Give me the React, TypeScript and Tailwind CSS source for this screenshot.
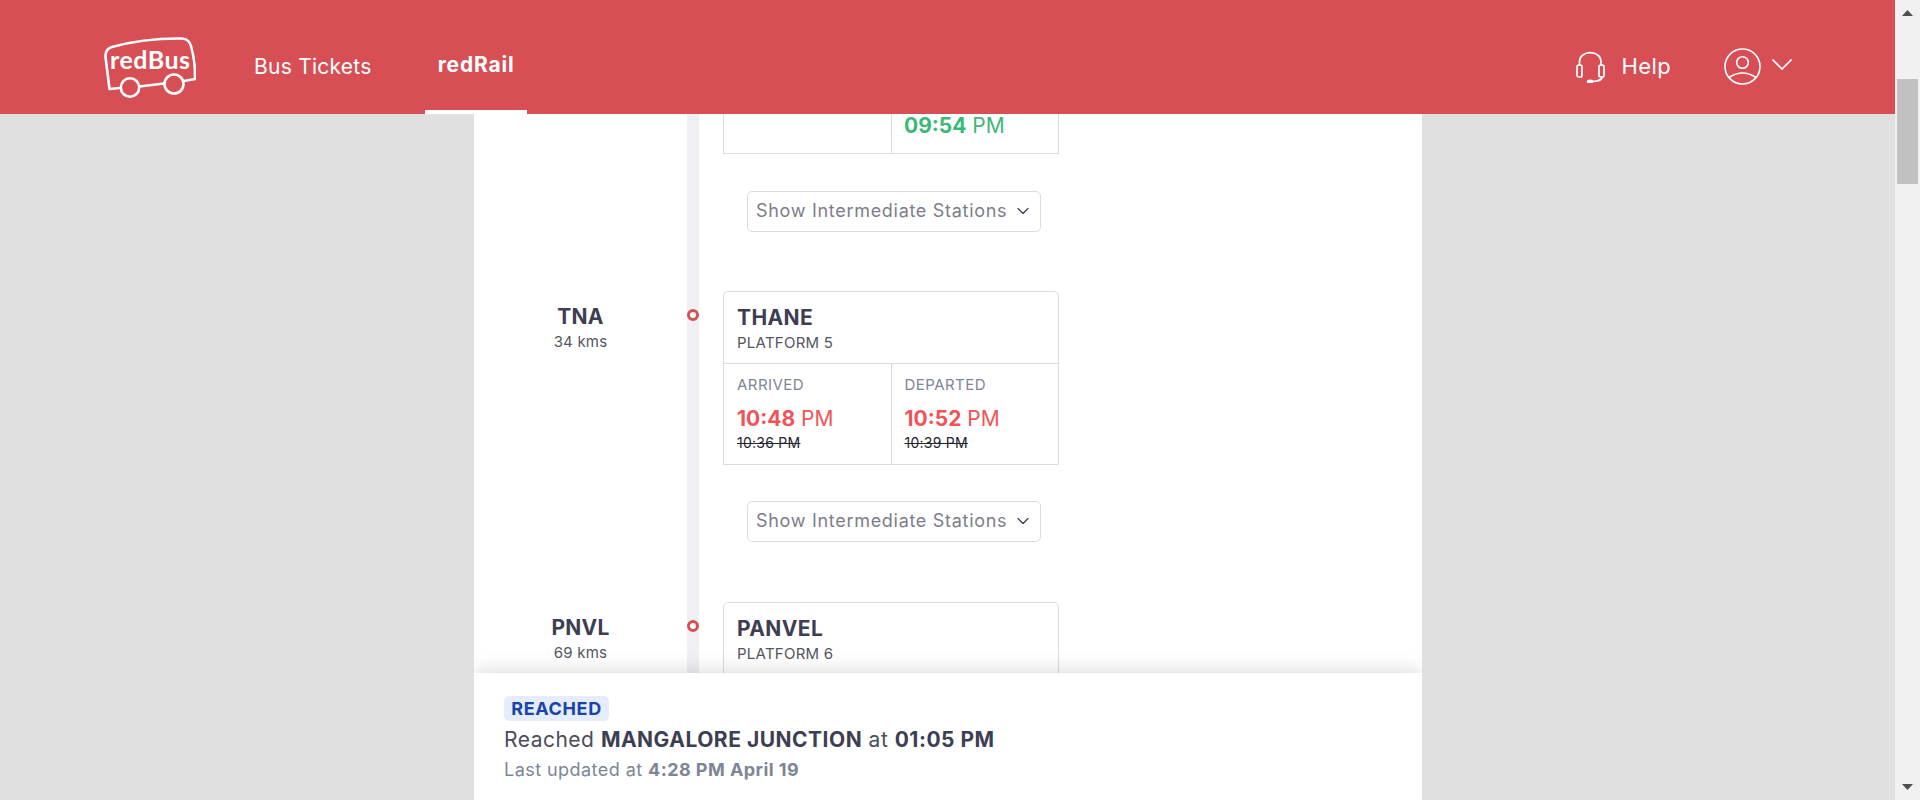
import { ChevronDown } from "lucide-react";

type Time = { label: string; time: string; scheduled: string };

const thaneTimes: Time[] = [
  { label: "ARRIVED", time: "10:48", scheduled: "10:36 PM" },
  { label: "DEPARTED", time: "10:52", scheduled: "10:39 PM" },
];

function Logo() {
  return (
    <svg width="92" height="62" viewBox="0 0 92 62" fill="none" stroke="white" strokeWidth="2.6" strokeLinejoin="round" strokeLinecap="round">
      <path d="M16 51 L5.5 52 L1.5 20 Q1 12 8 10 Q40 1 78 1.5 Q85 2 87 9 Q91.5 25 91 42 L80 44 M60 46.5 L35.5 49.5" />
      <circle cx="26" cy="50.5" r="9.2" />
      <circle cx="70" cy="47" r="9.5" />
      <text x="6" y="32" fill="white" stroke="none" fontSize="25" fontWeight="700" fontFamily="Lato, sans-serif" textLength="80">
        redBus
      </text>
    </svg>
  );
}

function Headset() {
  return (
    <svg width="29" height="32" viewBox="0 0 29 32" fill="none" stroke="white" strokeWidth="1.7" strokeLinecap="round">
      <path d="M3.5 14 V11 C3.5 -1.5 25 -1.5 25 11 V14" />
      <rect x="1" y="14" width="5" height="12" rx="1.8" />
      <rect x="23" y="14" width="5" height="12" rx="1.8" />
      <path d="M26 26 C26 29.5 22 30 16 30.5" />
      <ellipse cx="14" cy="30.5" rx="2.4" ry="1.2" fill="white" />
    </svg>
  );
}

function UserIcon() {
  return (
    <svg width="37" height="37" viewBox="0 0 37 37" fill="none" stroke="white" strokeWidth="1.6">
      <circle cx="18.5" cy="18.5" r="17.5" />
      <circle cx="18.5" cy="14.5" r="5.8" />
      <path d="M5 29.5 Q18.5 20.5 32 29.5" />
    </svg>
  );
}

function Header() {
  return (
    <header className="flex h-[114px] shrink-0 items-stretch bg-[#d84e55] pl-[104px] pr-[103px] text-white">
      <div className="flex items-center pt-[21px]">
        <Logo />
      </div>
      <div className="ml-[58px] flex items-center pt-[20px] text-[21px] tracking-[0.25px]">Bus Tickets</div>
      <div className="ml-[53px] flex w-[102px] items-center justify-center border-b-4 border-white pt-[20px] pl-[1px] text-[21px] font-bold tracking-[0.8px]">
        redRail
      </div>
      <div className="ml-auto flex items-center pt-[19px]">
        <Headset />
        <span className="ml-[16px] text-[22px] tracking-[0.4px]">Help</span>
        <div className="ml-[53px]">
          <UserIcon />
        </div>
        <svg className="ml-[11px] mb-[4px]" width="20" height="11" viewBox="0 0 20 11" fill="none" stroke="white" strokeWidth="1.6">
          <path d="M0.5 0.5 L10 10 L19.5 0.5" />
        </svg>
      </div>
    </header>
  );
}

function IntermediateButton() {
  return (
    <button className="ml-[24px] flex h-[41px] w-[294px] items-center rounded-[5px] border border-[#dcdcdc] bg-white pb-[2px] pl-[8px] text-[18px] tracking-[0.7px] whitespace-nowrap text-[#7d7d89]">
      Show Intermediate Stations
      <ChevronDown className="ml-[6px] text-[#3e3e52]" size={20} strokeWidth={1.5} />
    </button>
  );
}

function TimeCell({ label, time, scheduled, border }: Time & { border?: boolean }) {
  return (
    <div className={`flex-1 pl-[13px] pt-[11px] ${border ? "border-l border-[#dcdcdc]" : ""}`}>
      <div className="text-[15px] leading-[20px] tracking-[0.45px] text-[#7e8594]">{label}</div>
      <div className="mt-[10px] text-[21px] leading-[28px] text-[#ef5458]">
        <span className="font-bold">{time}</span> PM
      </div>
      <div className="text-[14px] leading-[20px] tracking-[0.25px] text-[#25252f] line-through">{scheduled}</div>
    </div>
  );
}

function Stop({ code, kms, name, platform, times }: { code: string; kms: string; name: string; platform: string; times?: Time[] }) {
  return (
    <div className="flex">
      <div className="w-[213px] pt-[14px] text-center">
        <div className="text-[21px] leading-[24px] font-bold tracking-[0.2px] text-[#3e3e52]">{code}</div>
        <div className="mt-[3px] text-[15px] leading-[20px] tracking-[0.2px] text-[#55555f]">{kms}</div>
      </div>
      <div className="w-[12px] bg-[#eff0f3] pt-[18px]">
        <div className="h-[12px] w-[12px] rounded-full border-[3.5px] border-[#d84e55] bg-white" />
      </div>
      <div className="flex-1 pl-[24px] pb-[60px]">
        <div className="w-[336px] rounded-t-[5px] border border-[#dcdcdc]">
          <div className="h-[71px] pl-[13px] pt-[14px]">
            <div className="text-[21px] leading-[24px] font-bold tracking-[0.4px] text-[#3e3e52]">{name}</div>
            <div className="mt-[3px] text-[15px] leading-[20px] tracking-[0.25px] text-[#55555f]">{platform}</div>
          </div>
          {times ? (
            <div className="flex h-[101px] border-t border-[#dcdcdc]">
              {times.map((t, i) => <TimeCell key={t.label} {...t} border={i > 0} />)}
            </div>
          ) : (
            <div className="h-[101px]" />
          )}
        </div>
        {times && (
          <div className="mt-[36px]">
            <IntermediateButton />
          </div>
        )}
      </div>
    </div>
  );
}

function StatusBar() {
  return (
    <div className="absolute inset-x-0 bottom-0 h-[127px] bg-white pl-[30px] pt-[23px] shadow-[0_0_20px_rgba(0,0,0,0.18)]">
      <span className="inline-block h-[25px] w-[105px] rounded-[5px] bg-[#e5ecfb] text-center text-[18px] leading-[25px] font-bold tracking-[0.65px] text-[#1a44a6]">
        REACHED
      </span>
      <div className="mt-[5px] text-[21px] leading-[28px] tracking-[0.5px] text-[#4c4c5a]">
        Reached <span className="font-bold text-[#3e3e52]">MANGALORE JUNCTION</span> at <span className="font-bold text-[#3e3e52]">01:05 PM</span>
      </div>
      <div className="mt-[5px] text-[18px] leading-[22px] tracking-[0.45px] text-[#7e8594]">
        Last updated at <span className="font-bold">4:28 PM April 19</span>
      </div>
    </div>
  );
}

function Scrollbar() {
  return (
    <div className="flex w-[25px] shrink-0 flex-col items-center bg-[#f1f1f1]">
      <svg className="mt-[10px]" width="11" height="6" viewBox="0 0 11 6" fill="#505050">
        <path d="M5.5 0 L11 6 H0 Z" />
      </svg>
      <div className="mt-[63px] h-[105px] w-[21px] bg-[#c1c1c1]" />
      <svg className="mt-auto mb-[10px]" width="11" height="6" viewBox="0 0 11 6" fill="#505050">
        <path d="M0 0 H11 L5.5 6 Z" />
      </svg>
    </div>
  );
}

export default function App() {
  return (
    <div className="flex h-[800px] overflow-hidden font-['Inter',sans-serif]">
      <div className="flex min-w-0 flex-1 flex-col">
        <Header />
        <main className="min-h-0 flex-1 bg-[#e0e0e0]">
          <div className="relative ml-[474px] h-full w-[948px] overflow-hidden bg-white">
            {/* first stop is scrolled under the header */}
            <div className="flex">
              <div className="w-[213px]" />
              <div className="w-[12px] bg-[#eff0f3]" />
              <div className="flex-1 pl-[24px] pb-[59px]">
                <div className="flex h-[40px] w-[336px] border-x border-b border-[#dcdcdc]">
                  <div className="w-[167px]" />
                  <div className="flex-1 border-l border-[#dcdcdc] pl-[12px] text-[21px] leading-[24px] text-[#3cb878]">
                    <span className="font-bold">09:54</span> PM
                  </div>
                </div>
                <div className="mt-[37px]">
                  <IntermediateButton />
                </div>
              </div>
            </div>
            <Stop code="TNA" kms="34 kms" name="THANE" platform="PLATFORM 5" times={thaneTimes} />
            <Stop code="PNVL" kms="69 kms" name="PANVEL" platform="PLATFORM 6" />
            <StatusBar />
          </div>
        </main>
      </div>
      <Scrollbar />
    </div>
  );
}
